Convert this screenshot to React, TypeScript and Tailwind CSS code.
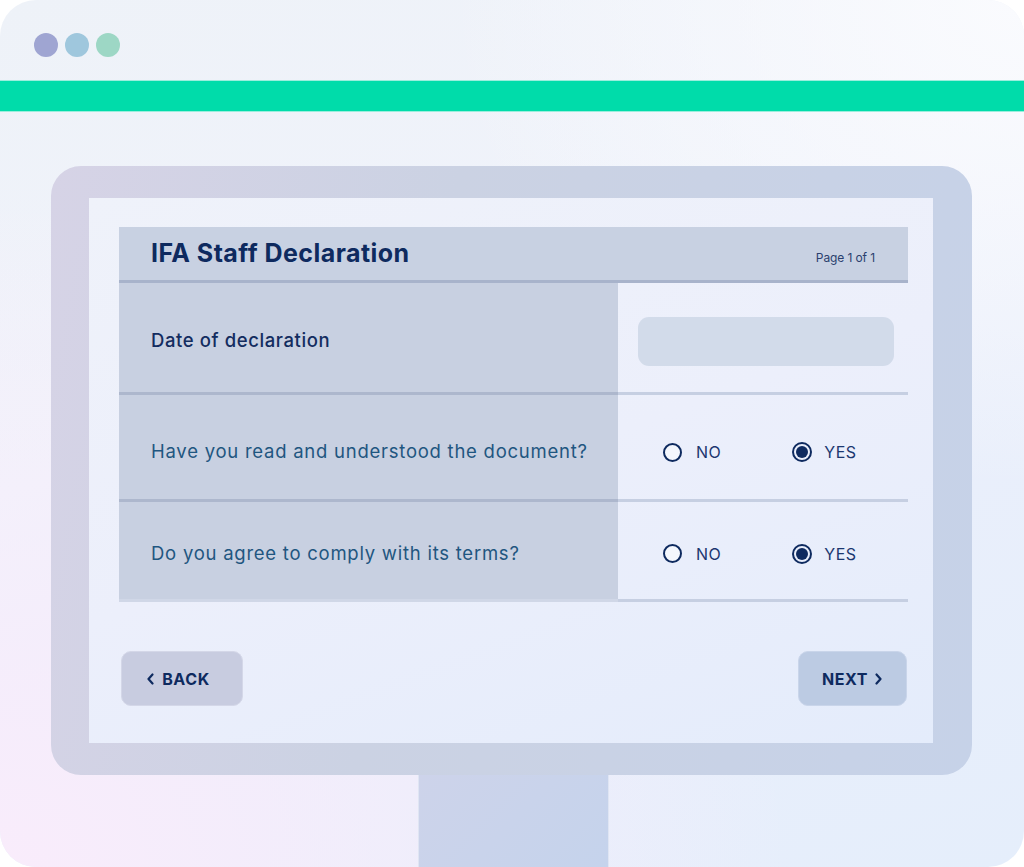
import React from "react";

function Radio({ checked, label }: { checked?: boolean; label: string }) {
  return (
    <div className={`flex items-center ${checked ? "gap-[12px]" : "gap-[14px]"}`}>
      {checked ? (
        <span className="w-[20px] h-[20px] rounded-full border-2 border-[#0e2a5f] flex items-center justify-center">
          <span className="w-[12px] h-[12px] rounded-full bg-[#0e2a5f]" />
        </span>
      ) : (
        <span className="w-[19px] h-[19px] rounded-full border-2 border-[#0e2a5f] bg-[#f4f7fd]" />
      )}
      <span className="text-[16px] text-[#1c3770] tracking-[0.5px]">{label}</span>
    </div>
  );
}

function QuestionRow({ q, h, pad, last }: { q: string; h: string; pad: string; last?: boolean }) {
  return (
    <div className={`flex ${h}`}>
      <div className={`w-[499px] bg-[#c8d0e1] border-b-[3px] ${last ? "border-[#d0d7e7]" : "border-[#adb7cd]"} flex items-center pl-[32px] ${pad} text-[18.5px] text-[#1f5680] tracking-[0.75px]`}>
        {q}
      </div>
      <div className={`flex-1 border-b-[3px] border-[#c6cfe2] flex items-center pl-[45px] ${pad} gap-[71px]`}>
        <Radio label="NO" />
        <Radio checked label="YES" />
      </div>
    </div>
  );
}

export default function App() {
  return (
    <div className="w-[1024px] h-[867px] bg-white" style={{ fontFamily: "Inter, 'Open Sans', sans-serif" }}>
      <div className="h-full rounded-[36px] overflow-hidden flex flex-col bg-[linear-gradient(160deg,#eef2f8_0%,#f0f3fb_40%,#eaeffb_60%,#e5eefb_100%)] relative">
        <div className="absolute inset-0 bg-[radial-gradient(ellipse_at_0%_100%,#f9ecfb_0%,rgba(249,236,251,0)_55%)] pointer-events-none" />
        <div className="absolute inset-0 bg-[radial-gradient(ellipse_at_100%_0%,#fafbfe_0%,rgba(250,251,254,0)_40%)] pointer-events-none" />
        <div className="relative h-[80px] flex items-start pt-[33px] pl-[34px] gap-[7px]">
          <span className="w-[24px] h-[24px] rounded-full bg-[#9fa5d2]" />
          <span className="w-[24px] h-[24px] rounded-full bg-[#9fc7dd]" />
          <span className="w-[24px] h-[24px] rounded-full bg-[#9dd7c5]" />
        </div>
        <div className="relative h-[32px] bg-[#00dcaa] border-y border-[#9beedd]" />
        <div className="relative mt-[54px] ml-[51px] w-[921px] h-[609px] rounded-[30px] bg-[linear-gradient(100deg,#d6d3e6_0%,#cbd2e3_40%,#c6d2e8_100%)] pt-[32px] pl-[38px] pr-[39px] pb-[32px]">
          <div className="w-full h-full bg-[linear-gradient(160deg,#eff2fa_0%,#eceffb_50%,#e4ecfb_100%)] pt-[29px] pl-[30px]">
            <div className="w-[789px]">
              <div className="h-[56px] bg-[#c8d1e2] border-b-[3px] border-[#a8b3cb] flex items-center justify-between pl-[32px] pr-[33px]">
                <span className="text-[25px] font-bold text-[#0e2a5f] tracking-[0.45px] pt-[1px]">IFA Staff Declaration</span>
                <span className="text-[12px] text-[#2a3f6e] pt-[8px] tracking-[-0.1px]">Page 1 of 1</span>
              </div>
              <div className="flex h-[112px]">
                <div className="w-[499px] bg-[#c8d0e1] border-b-[3px] border-[#adb7cd] flex items-center pl-[32px] pt-[6px] text-[18.5px] font-medium text-[#132c5f] tracking-[0.6px]">
                  Date of declaration
                </div>
                <div className="flex-1 border-b-[3px] border-[#c6cfe2] flex items-center pl-[20px] pt-[8px]">
                  <div className="w-[256px] h-[49px] rounded-[11px] bg-[#d2dbea]" />
                </div>
              </div>
              <QuestionRow h="h-[107px]" pad="pt-[10px]" q="Have you read and understood the document?" />
              <QuestionRow h="h-[100px]" pad="pt-[6px]" q="Do you agree to comply with its terms?" last />
              <div className="flex justify-between mt-[49px] pl-[2px] pr-[1px]">
                <button className="w-[122px] h-[55px] rounded-[10px] bg-[#c8cce0] border border-[#d4d7e8] flex items-center justify-center gap-[7px] pr-[8px] text-[16px] font-bold text-[#0e2a5f] tracking-[0.6px]">
                  <svg width="9" height="12" viewBox="0 0 9 12" fill="none"><path d="M6.5 1.5L2.5 6l4 4.5" stroke="#0e2a5f" strokeWidth="2.2" strokeLinecap="round" strokeLinejoin="round" /></svg>
                  BACK
                </button>
                <button className="w-[109px] h-[55px] rounded-[10px] bg-[#bccbe3] border border-[#c9d5ea] flex items-center justify-center gap-[6px] text-[16px] font-bold text-[#0e2a5f] tracking-[0.6px]">
                  NEXT
                  <svg width="9" height="12" viewBox="0 0 9 12" fill="none"><path d="M2.5 1.5L6.5 6l-4 4.5" stroke="#0e2a5f" strokeWidth="2.2" strokeLinecap="round" strokeLinejoin="round" /></svg>
                </button>
              </div>
            </div>
          </div>
        </div>
        <div className="relative ml-[418px] w-[191px] flex-1 bg-[linear-gradient(135deg,#cdd3ea_0%,#c5d3ec_100%)] border-x border-[#dfe5f3]" />
      </div>
    </div>
  );
}
